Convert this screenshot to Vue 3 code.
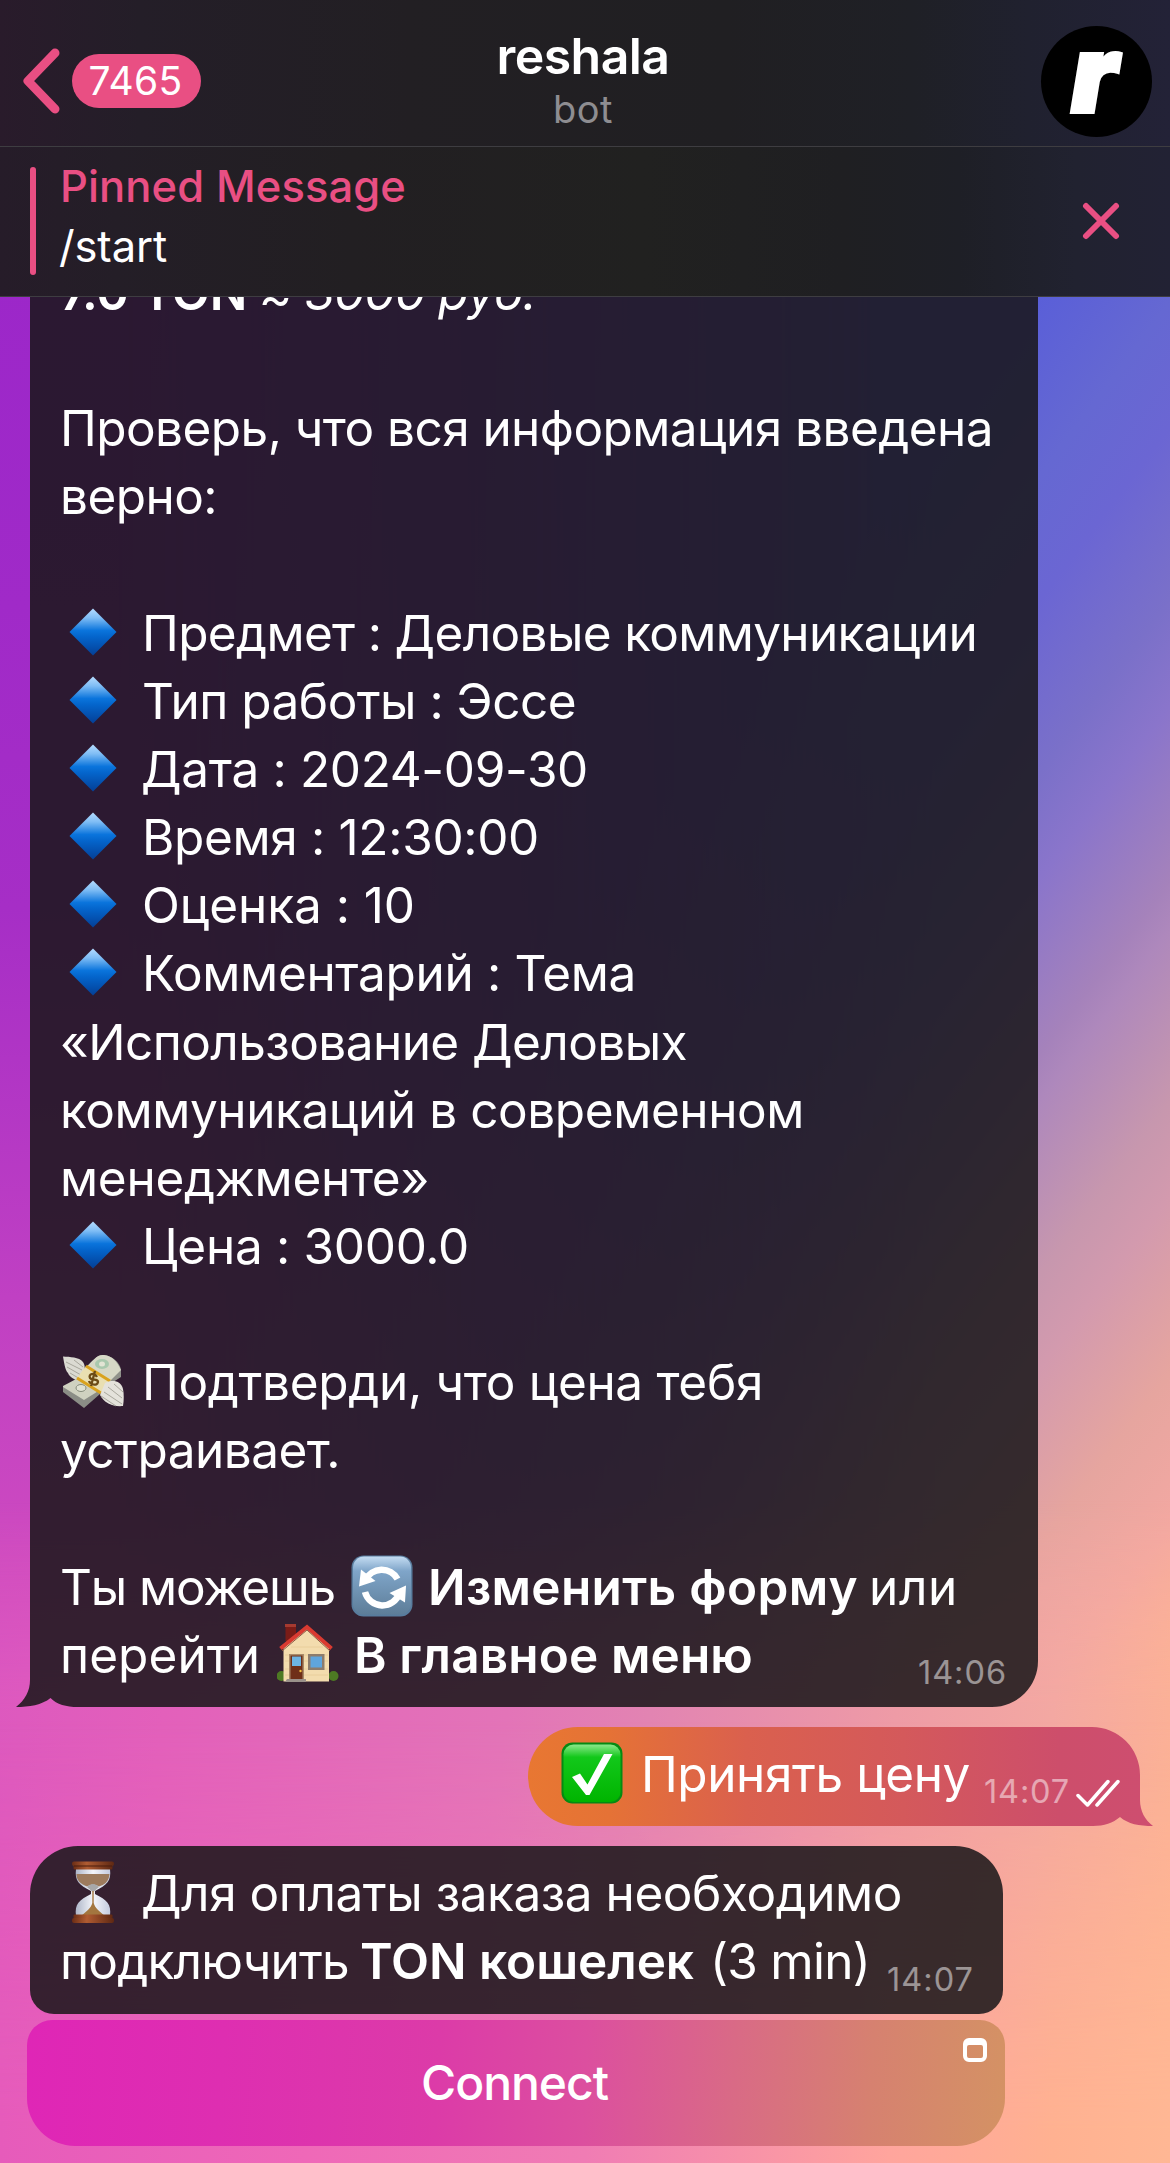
<script setup>
// Run of text: g = gap before it, w = advance width; b / i = bold / italic; e = emoji
const order = [
  [{ t: '7.0 TON', w: 187, b: 1 }, { t: '≈ 3000 руб.', g: 12, w: 277, i: 1 }],
  [],
  [{ t: 'Проверь, что вся информация введена', w: 933 }],
  [{ t: 'верно:', w: 157 }],
  [],
  [{ e: 'diamond' }, { t: 'Предмет : Деловые коммуникации', g: 16, w: 835 }],
  [{ e: 'diamond' }, { t: 'Тип работы : Эссе', g: 16, w: 434 }],
  [{ e: 'diamond' }, { t: 'Дата : 2024-09-30', g: 15, w: 447 }],
  [{ e: 'diamond' }, { t: 'Время : 12:30:00', g: 16, w: 397 }],
  [{ e: 'diamond' }, { t: 'Оценка : 10', g: 16, w: 273 }],
  [{ e: 'diamond' }, { t: 'Комментарий : Тема', g: 16, w: 494 }],
  [{ t: '«Использование Деловых', w: 627 }],
  [{ t: 'коммуникаций в современном', w: 744 }],
  [{ t: 'менеджменте»', w: 369 }],
  [{ e: 'diamond' }, { t: 'Цена : 3000.0', g: 16, w: 327 }],
  [],
  [{ e: 'money' }, { t: 'Подтверди, что цена тебя', g: 16, w: 621 }],
  [{ t: 'устраивает.', w: 280 }],
  [],
  [{ t: 'Ты можешь', w: 275 }, { e: 'refresh', g: 14 }, { t: 'Изменить форму', g: 13, w: 430, b: 1 }, { t: 'или', g: 11, w: 89 }],
  [{ t: 'перейти', w: 200 }, { e: 'house', g: 15 }, { t: 'В главное меню', g: 13, w: 399, b: 1 }],
]
const accept = [[{ e: 'check' }, { t: 'Принять цену', g: 16, w: 329 }]]
const payment = [
  [{ e: 'hourglass' }, { t: 'Для оплаты заказа необходимо', g: 15, w: 761 }],
  [{ t: 'подключить', w: 289 }, { t: 'TON кошелек', g: 11, w: 334, b: 1 }, { t: '(3 min)', g: 16, w: 160 }],
]

const messages = [
  { kind: 'order', lines: order, time: '14:06', tw: 89 },
  { kind: 'accept', lines: accept, time: '14:07', tw: 86 },
  { kind: 'payment', lines: payment, time: '14:07', tw: 87 },
]

// Tracks a run of text so that it fills the given width
const vFit = {
  mounted(el, { value }) {
    const natural = el.getBoundingClientRect().width
    el.style.letterSpacing = `${(value - natural) / el.textContent.length}px`
  },
}
</script>

<template>
  <main class="screen">
    <svg class="defs" width="0" height="0" aria-hidden="true">
      <defs>
        <linearGradient id="dia" x1="0" y1="0" x2="0" y2="1">
          <stop offset="0" stop-color="#b5dcff" /><stop offset=".2" stop-color="#7fbdf5" />
          <stop offset=".47" stop-color="#0a74dc" /><stop offset=".6" stop-color="#0465cc" /><stop offset="1" stop-color="#043f96" />
        </linearGradient>
        <linearGradient id="blue" x1="0" y1="0" x2="0" y2="1">
          <stop offset="0" stop-color="#c4dcf2" /><stop offset=".25" stop-color="#7fa5c9" /><stop offset="1" stop-color="#5d7d98" />
        </linearGradient>
        <linearGradient id="green" x1="0" y1="0" x2="0" y2="1">
          <stop offset="0" stop-color="#8be88b" /><stop offset=".22" stop-color="#12c81a" /><stop offset="1" stop-color="#00b400" />
        </linearGradient>
        <linearGradient id="wood" x1="0" y1="0" x2="1" y2="0">
          <stop offset="0" stop-color="#6b2d15" /><stop offset=".35" stop-color="#b05c32" /><stop offset="1" stop-color="#5e2813" />
        </linearGradient>
        <linearGradient id="glass" x1="0" y1="0" x2="1" y2="0">
          <stop offset="0" stop-color="#aeb6c8" /><stop offset=".5" stop-color="#f4f6fb" /><stop offset="1" stop-color="#c3cade" />
        </linearGradient>
        <linearGradient id="out" x1="0" y1="0" x2="1" y2="0">
          <stop offset="0" stop-color="#e87732" /><stop offset=".13" stop-color="#e57236" /><stop offset=".35" stop-color="#da604e" />
          <stop offset=".6" stop-color="#d4595b" /><stop offset=".85" stop-color="#cd4e6b" /><stop offset="1" stop-color="#ce4e70" />
        </linearGradient>

        <symbol id="diamond" viewBox="0 0 62 62">
          <path d="M31 7.5 54.5 31 31 54.5 7.500 31Z" fill="url(#dia)" />
        </symbol>
        <symbol id="refresh" viewBox="0 0 62 62">
          <rect x=".5" y=".5" width="61" height="61" rx="12" fill="#587c9d" />
          <rect x="2" y="1.500" width="58" height="58" rx="11" fill="url(#blue)" />
          <g fill="none" stroke="#fff" stroke-width="6.500">
            <path d="M14.500 25A18 18 0 0 1 46.500 24" /><path d="M14 37A18 18 0 0 0 48.500 38" />
          </g>
          <path d="M10 14.500 8 31.500 24.500 26Z" fill="#fff" /><path d="M55 30.500 38.500 38 54 47.500Z" fill="#fff" />
        </symbol>
        <symbol id="check" viewBox="0 0 62 62">
          <rect x=".5" y=".5" width="61" height="61" rx="11" fill="#058a13" />
          <rect x="2.500" y="2.500" width="57" height="57.500" rx="10" fill="url(#green)" />
          <path d="M11 35 19 31.500 26.500 42.500 43 12H51.500L28.500 53H25Z" fill="#fff" />
        </symbol>
        <symbol id="house" viewBox="0 0 62 62">
          <path d="M8.500 2H19V18H8.500Z" fill="#7a1c17" /><path d="M8 1H19V4H8Z" fill="#a53a30" />
          <circle cx="4.500" cy="53" r="5" fill="#4d7a23" /><circle cx="56.500" cy="53" r="5" fill="#4d7a23" />
          <path d="M6.500 25 30 4.500 52 25V58.500H6.500Z" fill="#f3dcae" />
          <path d="M8 32H51M8 38H51M8 46H51M8 52H51M14 24H46" stroke="#e6ca98" stroke-width=".8" />
          <path d="M3.500 25.500 30 4 54.500 25.500" fill="none" stroke="#d93a31" stroke-width="4" />
          <path d="M5 28 30 7 53 28" fill="none" stroke="#8d5a45" stroke-width="1" />
          <path d="M12 31H27V56H12Z" fill="#a98b6a" /><path d="M13.500 32.500H25.500V56H13.500Z" fill="#6f2f18" />
          <path d="M15 33.500H24V43H15Z" fill="#6db4e2" /><circle cx="23.500" cy="48" r="1.200" fill="#f2c244" />
          <path d="M31 31H47.500V47H31Z" fill="#8d7c6c" /><path d="M33.500 33.500H45V44.500H33.500Z" fill="#5fa5dd" />
          <path d="M10 56H29V59H8Z" fill="#9a918a" />
        </symbol>
        <symbol id="money" viewBox="0 0 62 62">
          <path d="M1 6.500C8 7 17 7 21 12C24 16 23 23 19 32C12 30 7 26 6 23C3 20 2 12 1 6.500Z" fill="#dbdad2" />
          <path d="M4 12 20 20M5 17 19 25M8 23 18 29M12 10 21 17" stroke="#a8a69c" stroke-width="1" />
          <path d="M24 17C31 11 35 4 42 5C50 6 58 12 59 20V27L48 34Z" fill="#8f918a" />
          <path d="M24 17C31 11 35 4 42 5C50 6 55 11 59 20L46 33Z" fill="#d6d8c6" />
          <ellipse cx="40" cy="14" rx="7" ry="5" fill="#a9c8ad" /><ellipse cx="40" cy="14" rx="3" ry="2.500" fill="#e2e4d4" />
          <path d="M18 27 40 39 22 54 1 41V36Z" fill="#cfd1c0" /><path d="M1 37 22 50 38 40V44L22 58 1 42Z" fill="#8b8d86" />
          <ellipse cx="19" cy="38" rx="5" ry="3.500" fill="#dfe1d2" stroke="#858b7b" />
          <path d="M24 16 48 31 39 43 15 28Z" fill="#e9dfb1" />
          <path d="M24 16 48 31M15 28 39 43" stroke="#d9a21e" stroke-width="3" />
          <path d="M35 27C32 22 26 24 28 28C30 31 36 28 36 32C35 37 28 34 27 31M33 21 29 36" fill="none" stroke="#6b4b16" stroke-width="2.300" />
          <path d="M43 33C51 29 59 31 61 39C62 44 62 50 61 56C51 57 42 53 38 45Z" fill="#e4e2db" />
          <path d="M42 42 60 54M46 37 60 48M39 46 54 56M52 34 61 42" stroke="#a9a79d" stroke-width="1" />
        </symbol>
        <symbol id="hourglass" viewBox="0 0 62 62">
          <path d="M14 8H48C49.500 20 45 24 33 30V33C45 39 49.500 43 48 55H14C12.500 43 17 39 29 33V30C17 24 12.500 20 14 8Z" fill="url(#glass)" />
          <path d="M14.500 13H47.500C47 21 42 24 37 25.500C33 23 29 23 25 25.500C19 23 14.500 20 14.500 13Z" fill="#9d7b5d" />
          <path d="M25 26C29 22 33 22 37 26L32 30.500H30Z" fill="#a8a8a9" />
          <path d="M30.300 30H31.700V42C33 47 37 50 43 55H19C25 50 29 47 30.300 42Z" fill="#a3763f" />
          <rect x="10" y=".5" width="42" height="4.500" rx="2" fill="url(#wood)" /><rect x="11.500" y="4.500" width="39" height="4" rx="1" fill="url(#wood)" />
          <path d="M12 5H50M12 57H50" stroke="#4a1d0d" stroke-width="1" />
          <rect x="11.500" y="53.500" width="39" height="4" rx="1" fill="url(#wood)" /><rect x="10" y="57" width="42" height="5" rx="2" fill="url(#wood)" />
        </symbol>
      </defs>
    </svg>

    <header class="nav">
      <div class="back">
        <svg width="38" height="66" viewBox="0 0 38 66"><path d="M33 5 6 33 33 61" /></svg>
        <span class="badge"><span v-fit="94">7465</span></span>
      </div>
      <div class="who">
        <h1><span v-fit="173">reshala</span></h1>
        <p><span v-fit="60">bot</span></p>
      </div>
      <div class="avatar"><span>r</span></div>
    </header>

    <section class="pinned">
      <i class="bar"></i>
      <div class="pin-text">
        <b><span v-fit="346">Pinned Message</span></b>
        <p><span v-fit="108">/start</span></p>
      </div>
      <svg class="close" width="38" height="38" viewBox="0 0 38 38"><path d="M4 4 34 34M34 4 4 34" /></svg>
    </section>

    <section class="chat">
      <div v-for="m in messages" :key="m.kind" class="bubble" :class="m.kind">
        <svg v-if="m.kind === 'order'" class="shape" width="1022" height="1450" viewBox="0 0 1022 1450">
          <path d="M14 0H1022V1404A46 46 0 0 1 976 1450H62C50 1450 41 1447.500 34.500 1441C26 1448 13 1450 0 1450C9 1443 14 1434 14 1423Z" fill="rgb(25 22 24 / .86)" />
        </svg>
        <svg v-if="m.kind === 'accept'" class="shape" width="625" height="99" viewBox="0 0 625 99">
          <path d="M49.500 0H564A48 48 0 0 1 612 48V73C612 84 617 93 625 99C611 99 600 97 592 90C585 96 576 99 565 99H49.500A49.500 49.500 0 0 1 49.500 0Z" fill="url(#out)" />
        </svg>
        <div class="text">
          <div v-for="(line, n) in m.lines" :key="n" class="line">
            <template v-for="(s, k) in line" :key="k">
              <svg v-if="s.e" class="emoji" :style="{ marginLeft: (s.g || 0) + 'px' }"><use :href="'#' + s.e" /></svg>
              <span v-else v-fit="s.w" :class="{ bold: s.b, italic: s.i }" :style="{ marginLeft: (s.g || 0) + 'px' }">{{ s.t }}</span>
            </template>
          </div>
        </div>
        <div class="meta">
          <time><span v-fit="m.tw">{{ m.time }}</span></time>
          <svg v-if="m.kind === 'accept'" width="44" height="28" viewBox="0 0 44 28"><path d="M2 16.500 11.500 26 32 2.500M21 26 42 2.500" /></svg>
        </div>
      </div>
      <button class="connect">
        <span v-fit="187">Connect</span>
        <svg class="web" width="24" height="24" viewBox="0 0 24 24">
          <path fill-rule="evenodd" d="M6 0H18A6 6 0 0 1 24 6V18A6 6 0 0 1 18 24H6A6 6 0 0 1 0 18V6A6 6 0 0 1 6 0ZM6 7A2 2 0 0 0 4 9V18A2 2 0 0 0 6 20H18A2 2 0 0 0 20 18V9A2 2 0 0 0 18 7Z" fill="#fff" />
        </svg>
      </button>
    </section>
  </main>
</template>

<style>
body { margin: 0; }
</style>

<style scoped>
.screen {
  position: relative;
  isolation: isolate;
  display: flex;
  flex-direction: column;
  width: 1170px;
  height: 2163px;
  overflow: hidden;
  font-family: Inter, "Liberation Sans", sans-serif;
  color: #fff;
  background: linear-gradient(180deg, #9c27c9 13%, #a02ac8 28%, #a62ec6 42%, #c040c3 60%, #cf4bc0 74%, #d650c3 79%, #e25bbd 93%, #e65bbb);
}
.screen::before, .screen::after, .chat::before {
  content: "";
  position: absolute;
  inset: 0;
  z-index: -3;
}
.screen::before {
  background: linear-gradient(127deg, #5a5fd8 45.2%, #6568d2 49.9%, #6b66d3 53.3%, #7a70c9 57.9%, #8a75cb 60.8%, #a582bb 65.5%, #ae88bc 66.8%, #c797ae 71.4%, #d39aae 74%, #e6a59f 78.7%, #f3a8a2 82.9%, #ffb593 87.5%);
  -webkit-mask: linear-gradient(90deg, transparent 10%, rgb(0 0 0 / .45) 45%, #000 80%);
  mask: linear-gradient(90deg, transparent 10%, rgb(0 0 0 / .45) 45%, #000 80%);
}
.screen::after {
  z-index: -2;
  background: linear-gradient(97deg, #d650c3, #e360bb 26%, #e374b8 50%, #e284b2 60%, #ee9ba6 77%, #f3a8a2 88%, #ffb492);
  -webkit-mask: linear-gradient(180deg, transparent 1500px, #000 1710px);
  mask: linear-gradient(180deg, transparent 1500px, #000 1710px);
}
.chat::before {
  z-index: -1;
  background: linear-gradient(90deg, #e65bbb, #ef68b8 26%, #f07cb4 50%, #f58cac 60%, #ffa59d 76%, #ffb191 90%, #ffb794);
  -webkit-mask: linear-gradient(180deg, transparent 1720px, #000 2130px);
  mask: linear-gradient(180deg, transparent 1720px, #000 2130px);
}
.defs { position: absolute; }
h1, p { margin: 0; }
span { display: inline-block; white-space: pre; }

.nav, .pinned {
  flex: none;
  box-sizing: border-box;
  display: flex;
  align-items: center;
  border-bottom: 1px solid #3e3d41;
}
.nav {
  height: 147px;
  justify-content: space-between;
  padding: 16px 18px 0 22px;
  background: linear-gradient(90deg, #291b2b, #241e28 12%, #221f23 35%, #201f22 62%, #1f2026 78%, #20212f 88%, #232237);
}
.back, .who { width: 250px; }
.back { display: flex; align-items: center; gap: 12px; margin-top: -1px; }
.back path, .close path {
  fill: none;
  stroke: #e94f83;
  stroke-width: 9;
  stroke-linecap: round;
  stroke-linejoin: round;
}
.badge {
  width: 129px;
  height: 54px;
  border-radius: 27px;
  background: #e94f83;
  font-size: 39px;
  line-height: 53px;
  text-align: center;
}
.badge span { margin-left: -2px; }
.who { margin-left: -147px; text-align: center; }
.who h1 { font-size: 50px; line-height: 58px; font-weight: 600; margin-top: -5px; }
.who p { font-size: 38px; line-height: 44px; color: #8e8d91; margin-top: 2px; }
.avatar {
  width: 111px;
  height: 111px;
  border-radius: 50%;
  background: #000;
  text-align: center;
}
.avatar span {
  font: italic 900 106px/111px Inter, sans-serif;
  margin: -8px 0 0 -4px;
  -webkit-text-stroke: 4px #fff;
}

.pinned {
  height: 150px;
  padding: 0 50px 0 30px;
  background: linear-gradient(90deg, #261c29, #241e27 10%, #221f22 30%, #212120 55%, #1f1f22 72%, #1e1f26 82%, #212230 92%, #222234);
}
.bar { width: 6px; height: 108px; border-radius: 3px; background: #e94f83; margin-top: -2px; }
.close { margin-top: -1px; }
.pin-text { flex: 1; margin: -11px 0 0 24px; font-size: 43.500px; line-height: 60px; }
.pin-text b { display: block; font-weight: 500; color: #e94f83; }
.pin-text p { margin-left: -1px; }
.close path { stroke-width: 6; }

.chat {
  flex: 1;
  min-height: 0;
  display: flex;
  flex-direction: column;
  justify-content: flex-end;
  align-items: flex-start;
  overflow: hidden;
  padding-bottom: 17px;
}
.bubble {
  flex: none;
  position: relative;
  box-sizing: border-box;
  font-size: 49.500px;
  line-height: 68.150px;
}
.shape { position: absolute; left: 0; bottom: 0; }
.text { position: relative; }
.line { height: 68.150px; white-space: nowrap; display: flex; align-items: baseline; }
.emoji { flex: none; align-self: flex-start; width: 62px; height: 62px; padding: 0 2px; margin-top: 2px; }
.bold { font-weight: 600; }
.italic { font-style: italic; }
.meta {
  position: absolute;
  display: flex;
  align-items: center;
  font-size: 32.500px;
  line-height: 40px;
  color: rgb(255 255 255 / .5);
}
.order { margin-left: 16px; width: 1022px; padding: 0 0 18px 44px; margin-bottom: 20px; }
.order .meta { right: 31px; bottom: 14px; }
.accept { align-self: flex-end; width: 625px; height: 99px; margin: 0 17px 20px 0; padding: 13px 0 0 31px; }
.accept .meta { left: 456px; bottom: 14px; gap: 6px; }
.accept .meta svg { position: relative; top: 1px; }
.accept .meta path { fill: none; stroke: #fff; stroke-width: 3.500; stroke-linecap: round; stroke-linejoin: round; }
.payment {
  margin-left: 30px;
  width: 973px;
  height: 168px;
  padding: 13px 0 0 30px;
  border-radius: 48px 48px 24px 24px;
  background: rgb(25 22 24 / .86);
}
.payment .meta { right: 29px; bottom: 14px; }
.connect {
  flex: none;
  position: relative;
  box-sizing: border-box;
  margin: 6px 0 0 27px;
  width: 978px;
  height: 126px;
  padding: 0 3px 0 0;
  border: 0;
  border-radius: 25px 25px 48px 48px;
  color: #fff;
  font: 500 48px/122px Inter, sans-serif;
  text-align: center;
  background: linear-gradient(93deg, #df26b6, #de2eb1 20%, #dc3ba8 42%, #dc4f9f 57%, #d96a86 72%, #d68170 86%, #d49264);
}
.web { position: absolute; right: 18px; top: 18px; }
</style>
